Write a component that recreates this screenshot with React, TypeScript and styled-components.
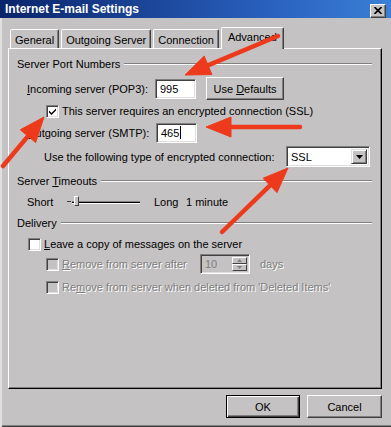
import styled, { createGlobalStyle } from "styled-components"

const FACE = "#c4c2c2"

const GlobalStyle = createGlobalStyle`
  html, body { margin: 0; padding: 0; background: ${FACE}; }
  body {
    font-family: "Liberation Sans", Arial, sans-serif;
    font-size: 11px;
    color: #000;
  }
`

const Window = styled.div`
  position: relative;
  width: 391px;
  height: 427px;
  box-sizing: border-box;
  background: ${FACE};
  box-shadow: inset 2px 0 0 #e0e0e0, inset 0 -1px 0 #404040, inset 0 -2px 0 #808080;
  overflow: hidden;
`

const TitleBar = styled.div`
  height: 18px;
  display: flex;
  align-items: center;
  justify-content: space-between;
  padding: 0 5px;
  background: linear-gradient(to right, #0a246a, #2a62c0 70%, #3b7fd6);
`

const TitleText = styled.span`
  color: #fff;
  font-weight: bold;
  font-size: 12px;
  line-height: 18px;
`

const CloseButton = styled.div`
  width: 16px;
  height: 14px;
  box-sizing: border-box;
  margin-top: 3px;
  background: ${FACE};
  border: 1px solid;
  border-color: #fff #404040 #404040 #fff;
  box-shadow: inset -1px -1px 0 #808080;
  display: flex;
  align-items: center;
  justify-content: center;
`

const TabStrip = styled.div`
  height: 30px;
  box-sizing: border-box;
  display: flex;
  align-items: flex-end;
  gap: 2px;
  padding-left: 10px;
`

const Tab = styled.div<{ $active?: boolean }>`
  position: relative;
  z-index: 2;
  height: ${({ $active }) => ($active ? 22 : 19)}px;
  margin-bottom: ${({ $active }) => ($active ? -1 : 0)}px;
  box-sizing: border-box;
  padding: ${({ $active }) => ($active ? "0 6px 3px" : "1px 4px 0")};
  display: flex;
  align-items: center;
  background: ${FACE};
  border: 1px solid;
  border-bottom: none;
  border-color: #fff #404040 transparent #fff;
  border-radius: 2px 2px 0 0;
  box-shadow: inset -1px 0 0 #808080;
`

const Panel = styled.div`
  position: relative;
  height: 341px;
  margin: 0 9px 0 8px;
  box-sizing: border-box;
  border: 1px solid;
  border-color: #fff #000 #000 #fff;
  box-shadow: inset -1px -1px 0 #808080;
  padding: 8px 9px 0 8px;
  display: flex;
  flex-direction: column;
`

const GroupHeader = styled.div<{ $top?: number }>`
  height: 14px;
  margin-top: ${({ $top }) => $top ?? 0}px;
  display: flex;
  align-items: center;
  gap: 4px;
  white-space: nowrap;
`

const EtchedLine = styled.div`
  flex: 1;
  height: 0;
  border-top: 1px solid #808080;
  border-bottom: 1px solid #fff;
`

const Row = styled.div<{ $top: number; $h: number; $indent: number }>`
  height: ${({ $h }) => $h}px;
  margin-top: ${({ $top }) => $top}px;
  padding-left: ${({ $indent }) => $indent}px;
  display: flex;
  align-items: center;
  white-space: nowrap;
`

const FieldLabel = styled.span<{ $width?: number; $disabled?: boolean }>`
  ${({ $width }) => ($width ? `width: ${$width}px; flex: none;` : "")}
  color: ${({ $disabled }) => ($disabled ? "#808080" : "#000")};
  text-shadow: ${({ $disabled }) => ($disabled ? "1px 1px 0 #fff" : "none")};
`

const Sunken = styled.div<{ $width: number; $h: number; $disabled?: boolean }>`
  width: ${({ $width }) => $width}px;
  height: ${({ $h }) => $h}px;
  box-sizing: border-box;
  flex: none;
  display: flex;
  align-items: center;
  padding-left: 4px;
  background: ${({ $disabled }) => ($disabled ? FACE : "#fff")};
  color: ${({ $disabled }) => ($disabled ? "#808080" : "#000")};
  border: 1px solid;
  border-color: #808080 #fff #fff #808080;
  box-shadow: inset 1px 1px 0 #404040, inset -1px -1px 0 #dfdfdf;
  position: relative;
`

const Caret = styled.span`
  display: inline-block;
  width: 1px;
  height: 13px;
  background: #000;
  margin-left: 1px;
`

const Spacer = styled.span<{ $w: number }>`
  width: ${({ $w }) => $w}px;
  flex: none;
`

const PushButton = styled.div<{ $width: number; $default?: boolean }>`
  width: ${({ $width }) => $width}px;
  height: 23px;
  box-sizing: border-box;
  flex: none;
  display: flex;
  align-items: center;
  justify-content: center;
  white-space: pre;
  background: ${FACE};
  border: 1px solid;
  border-color: ${({ $default }) => ($default ? "#000" : "#fff #404040 #404040 #fff")};
  box-shadow: ${({ $default }) =>
    $default
      ? "inset 1px 1px 0 #fff, inset -1px -1px 0 #404040, inset -2px -2px 0 #808080"
      : "inset -1px -1px 0 #808080"};
`

const Check = styled.div<{ $disabled?: boolean }>`
  width: 13px;
  height: 13px;
  flex: none;
  box-sizing: border-box;
  margin-right: 3px;
  background: ${({ $disabled }) => ($disabled ? FACE : "#fff")};
  border: 1px solid;
  border-color: #808080 #fff #fff #808080;
  box-shadow: inset 1px 1px 0 #404040, inset -1px -1px 0 #dfdfdf;
  display: flex;
  align-items: center;
  justify-content: center;
`

const DropButton = styled.div`
  position: absolute;
  right: 2px;
  top: 2px;
  width: 16px;
  height: 15px;
  box-sizing: border-box;
  background: ${FACE};
  border: 1px solid;
  border-color: #dfdfdf #404040 #404040 #dfdfdf;
  box-shadow: inset 1px 1px 0 #fff, inset -1px -1px 0 #808080;
  display: flex;
  align-items: center;
  justify-content: center;
`

const SpinButtons = styled.div`
  position: absolute;
  right: 2px;
  top: 2px;
  bottom: 2px;
  width: 15px;
  display: flex;
  flex-direction: column;
`

const SpinHalf = styled.div`
  flex: 1;
  box-sizing: border-box;
  background: ${FACE};
  border: 1px solid;
  border-color: #fff #404040 #404040 #fff;
  display: flex;
  align-items: center;
  justify-content: center;
`

const Slider = styled.div`
  position: relative;
  width: 73px;
  height: 14px;
  flex: none;
  margin-right: 14px;
  display: flex;
  align-items: center;
`

const SliderTrack = styled.div`
  flex: 1;
  height: 1px;
  margin-left: 5px;
  background: #000;
  border-top: 1px solid #808080;
  border-bottom: 1px solid #fff;
`

const SliderTick = styled.div`
  position: absolute;
  left: 0;
  top: 6px;
  width: 4px;
  height: 1px;
  background: #404040;
`

const SliderThumb = styled.div`
  position: absolute;
  left: 7px;
  top: 1px;
  width: 5px;
  height: 10px;
  box-sizing: border-box;
  background: ${FACE};
  border: 1px solid;
  border-color: #fff #404040 #404040 #fff;
`

const ButtonBar = styled.div`
  display: flex;
  justify-content: flex-end;
  gap: 7px;
  padding: 6px 9px 0 0;
`

const Overlay = styled.svg`
  position: absolute;
  left: 0;
  top: 0;
  pointer-events: none;
  z-index: 10;
`

const Arrow = ({ tail, tip }: { tail: [number, number]; tip: [number, number] }) => {
  const dx = tip[0] - tail[0]
  const dy = tip[1] - tail[1]
  const len = Math.hypot(dx, dy)
  const ux = dx / len
  const uy = dy / len
  const headLen = 25
  const half = 10
  const bx = tip[0] - ux * headLen
  const by = tip[1] - uy * headLen
  const nx = -uy
  const ny = ux
  const pts = `${tip[0]},${tip[1]} ${bx + nx * half},${by + ny * half} ${bx - nx * half},${by - ny * half}`
  return (
    <g fill="#ee3a1c" stroke="#ee3a1c">
      <line x1={tail[0]} y1={tail[1]} x2={bx + ux * 4} y2={by + uy * 4} strokeWidth={4.5} strokeLinecap="round" />
      <polygon points={pts} strokeWidth={1} strokeLinejoin="round" />
    </g>
  )
}

const CheckMark = () => (
  <svg width="9" height="9" viewBox="0 0 9 9">
    <path d="M1 3.5 L3.5 6 L8 1.5 L8 3.5 L3.5 8 L1 5.5 Z" fill="#000" />
  </svg>
)

const Triangle = ({ size = 7, up = false, color = "#000" }: { size?: number; up?: boolean; color?: string }) => {
  const h = Math.ceil(size / 2)
  return (
    <svg width={size} height={h} viewBox={`0 0 ${size} ${h}`}>
      <polygon points={up ? `0,${h} ${size},${h} ${size / 2},0` : `0,0 ${size},0 ${size / 2},${h}`} fill={color} />
    </svg>
  )
}

export default function App() {
  return (
    <>
      <GlobalStyle />
      <Window>
        <TitleBar>
          <TitleText>Internet E-mail Settings</TitleText>
          <CloseButton>
            <svg width="8" height="7" viewBox="0 0 8 7">
              <path d="M0.5 0 L7.5 7 M7.5 0 L0.5 7" stroke="#000" strokeWidth="1.6" />
            </svg>
          </CloseButton>
        </TitleBar>

        <TabStrip>
          <Tab>General</Tab>
          <Tab>Outgoing Server</Tab>
          <Tab>Connection</Tab>
          <Tab $active>Advanced</Tab>
        </TabStrip>

        <Panel>
          <GroupHeader>
            Server Port Numbers
            <EtchedLine />
          </GroupHeader>
          <Row $top={6} $h={23} $indent={10}>
            <FieldLabel $width={128}>
              <u>I</u>ncoming server (POP3):
            </FieldLabel>
            <Sunken $width={41} $h={20}>995</Sunken>
            <Spacer $w={10} />
            <PushButton $width={78}>
              <span>
                Use <u>D</u>efaults
              </span>
            </PushButton>
          </Row>
          <Row $top={4} $h={14} $indent={29}>
            <Check>
              <CheckMark />
            </Check>
            <FieldLabel>This server requires an encrypted connection (SSL)</FieldLabel>
          </Row>
          <Row $top={4} $h={21} $indent={10}>
            <FieldLabel $width={129}>
              <u>O</u>utgoing server (SMTP):
            </FieldLabel>
            <Sunken $width={41} $h={20}>
              465
              <Caret />
            </Sunken>
          </Row>
          <Row $top={3} $h={21} $indent={27}>
            <FieldLabel $width={242}>Use the following type of encrypted connection:</FieldLabel>
            <Sunken $width={84} $h={21}>
              SSL
              <DropButton>
                <Triangle />
              </DropButton>
            </Sunken>
          </Row>

          <GroupHeader $top={7}>
            <span>
              Server <u>T</u>imeouts
            </span>
            <EtchedLine />
          </GroupHeader>
          <Row $top={7} $h={14} $indent={10}>
            <FieldLabel $width={40}>Short</FieldLabel>
            <Slider>
              <SliderTick />
              <SliderTrack />
              <SliderThumb />
            </Slider>
            <FieldLabel $width={32}>Long</FieldLabel>
            <FieldLabel>1 minute</FieldLabel>
          </Row>

          <GroupHeader $top={7}>
            Delivery
            <EtchedLine />
          </GroupHeader>
          <Row $top={7} $h={14} $indent={11}>
            <Check />
            <FieldLabel>
              <u>L</u>eave a copy of messages on the server
            </FieldLabel>
          </Row>
          <Row $top={3} $h={20} $indent={29}>
            <Check $disabled />
            <FieldLabel $width={138} $disabled>
              <u>R</u>emove from server after
            </FieldLabel>
            <Sunken $width={50} $h={20} $disabled>
              10
              <SpinButtons>
                <SpinHalf>
                  <Triangle size={5} up color="#808080" />
                </SpinHalf>
                <SpinHalf>
                  <Triangle size={5} color="#808080" />
                </SpinHalf>
              </SpinButtons>
            </Sunken>
            <Spacer $w={10} />
            <FieldLabel $disabled>days</FieldLabel>
          </Row>
          <Row $top={6} $h={14} $indent={29}>
            <Check $disabled />
            <FieldLabel $disabled>
              Re<u>m</u>ove from server when deleted from 'Deleted Items'
            </FieldLabel>
          </Row>
        </Panel>

        <ButtonBar>
          <PushButton $width={74} $default>
            OK
          </PushButton>
          <PushButton $width={75}>Cancel</PushButton>
        </ButtonBar>

        <Overlay width={391} height={427} viewBox="0 0 391 427">
          <Arrow tail={[278, 36]} tip={[185, 75]} />
          <Arrow tail={[3, 166]} tip={[44, 117]} />
          <Arrow tail={[300, 127]} tip={[206, 127]} />
          <Arrow tail={[222, 232]} tip={[288, 168]} />
        </Overlay>
      </Window>
    </>
  )
}
